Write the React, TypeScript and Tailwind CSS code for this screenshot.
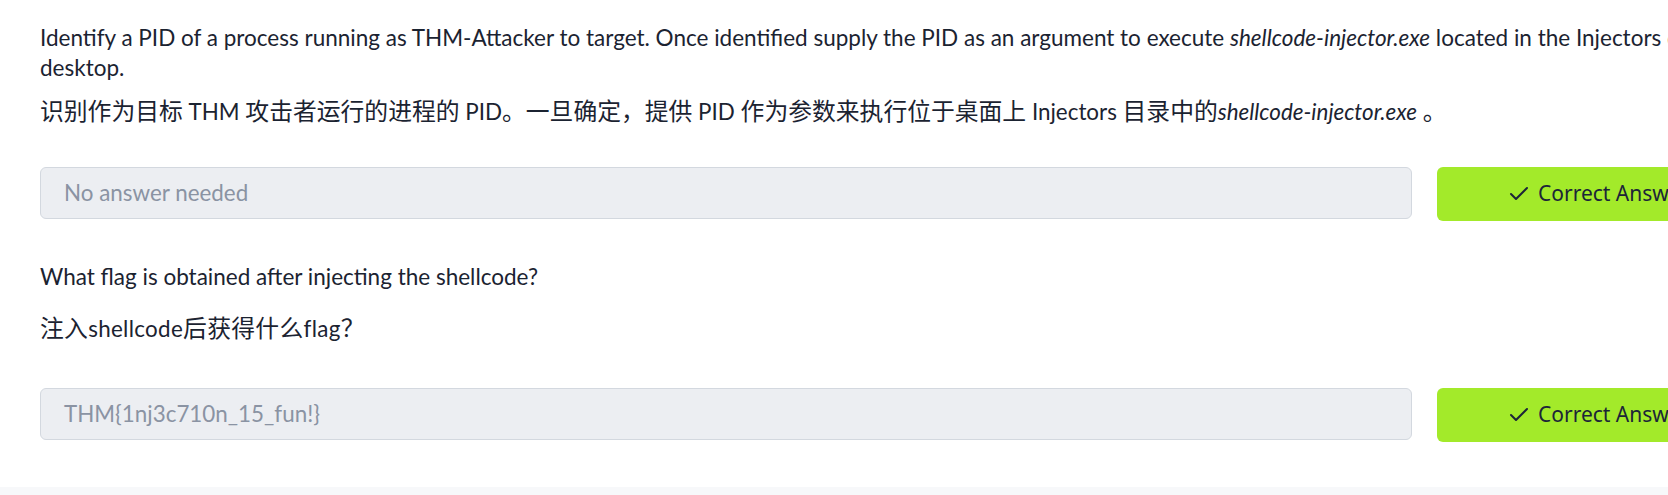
import React from "react";
import { Check } from "lucide-react";

const C = ({ children }: { children: React.ReactNode }) => (
  <span className="text-[23.8px] [font-family:'Noto_Sans_CJK_SC',sans-serif]">{children}</span>
);

const AnswerRow = ({ value }: { value: string }) => (
  <div className="flex w-[1721px] gap-[25px]">
    <div className="flex h-[52px] flex-1 items-center rounded-[6px] border border-[#d3d8df] bg-[#eceef2] pl-[23px] text-[22.4px] text-[#8a93a3]">
      {value}
    </div>
    <div className="flex h-[54px] w-[324px] items-center gap-[7px] rounded-[6px] bg-[#a3ea2a] pl-[70px] text-[21px] text-[#1c2538] [font-family:'Noto_Sans',sans-serif]">
      <Check size={24} strokeWidth={2} className="-mt-[1px]" />
      <span>Correct Answer</span>
    </div>
  </div>
);

export default function App() {
  return (
    <div className="flex h-[495px] w-[1668px] flex-col overflow-hidden bg-white text-[#1b2331] [font-family:Lato,'Noto_Sans_CJK_SC',sans-serif]">
      <div className="flex-1 pl-[40px] pt-[23px]">
        <p className="whitespace-nowrap text-[22.5px] leading-[30px]">
          Identify a PID of a process running as THM-Attacker to target. Once identified supply the PID as an argument to
          execute <i>shellcode-injector.exe</i> located in the Injectors directory on the
          <br />
          desktop.
        </p>
        <p className="mt-[9px] whitespace-nowrap text-[22.4px] leading-[36px]">
          <C>识别作为目标</C> THM <C>攻击者运行的进程的</C> PID<C>。一旦确定，提供</C> PID <C>作为参数来执行位于桌面上</C> Injectors{" "}
          <C>目录中的</C>
          <i>shellcode-injector.exe</i> <C>。</C>
        </p>
        <div className="mt-[37px]">
          <AnswerRow value="No answer needed" />
        </div>
        <p className="mt-[41px] whitespace-nowrap text-[22.5px] leading-[30px]">
          What flag is obtained after injecting the shellcode?
        </p>
        <p className="mt-[17px] whitespace-nowrap text-[22.4px] leading-[36px] tracking-[0.3px]">
          <C>注入</C>shellcode<C>后获得什么</C>flag<C>？</C>
        </p>
        <div className="mt-[41px]">
          <AnswerRow value="THM{1nj3c710n_15_fun!}" />
        </div>
      </div>
      <div className="h-[8px] bg-[#f7f8fa]" />
    </div>
  );
}
